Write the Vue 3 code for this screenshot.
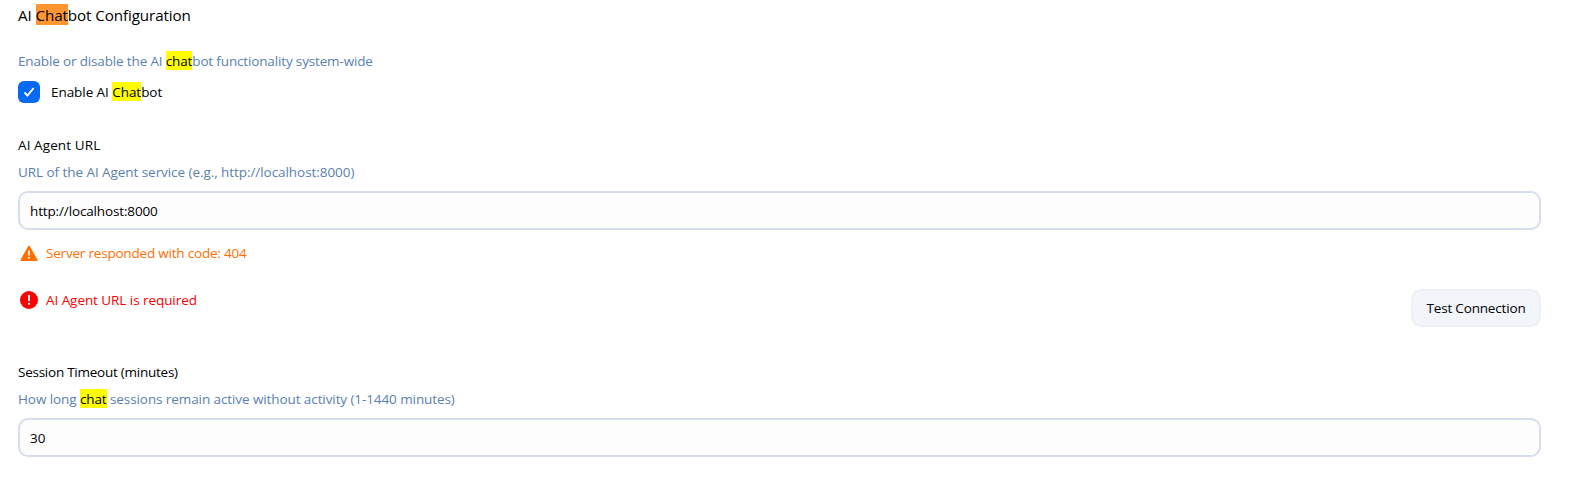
<script setup>
import { ref } from 'vue'

const enabled = ref(true)
const agentUrl = ref('http://localhost:8000')
const timeout = ref('30')
</script>

<template>
  <main class="settings">
    <h2 class="title">AI <mark class="current">Chat</mark>bot Configuration</h2>

    <section class="group toggle">
      <p class="hint hint-enable">Enable or disable the AI <mark>chat</mark>bot functionality system-wide</p>
      <label class="check">
        <input v-model="enabled" class="native" type="checkbox" />
        <span class="box">
          <svg v-if="enabled" viewBox="0 0 22 22" width="22" height="22">
            <path d="M6.5 11.5 L9.4 14.5 L15.6 7.2" fill="none" stroke="#fff" stroke-width="1.9" />
          </svg>
        </span>
        <span class="check-text">Enable AI <mark>Chat</mark>bot</span>
      </label>
    </section>

    <section class="group agent">
      <label class="label label-agent" for="agent-url">AI Agent URL</label>
      <p class="hint hint-agent">URL of the AI Agent service (e.g., http://localhost:8000)</p>
      <input id="agent-url" v-model="agentUrl" class="field field-url" type="text" />
      <div class="message warning">
        <svg viewBox="0 0 18 17" width="18" height="17">
          <path d="M9 1.3 L16.8 15.2 H1.2 Z" fill="#ff7000" stroke="#ff7000" stroke-width="1.6" stroke-linejoin="round" />
          <path d="M9 5.5 V10.5 M9 12 V13.8" stroke="#fff" stroke-width="1.6" />
        </svg>
        <span class="warning-text">Server responded with code: 404</span>
      </div>
      <div class="actions">
        <div class="message error">
          <svg viewBox="0 0 18 18" width="18" height="18">
            <circle cx="9" cy="9" r="9" fill="#fa0000" />
            <path d="M9 4 V10 M9 11.8 V13.8" stroke="#fff" stroke-width="1.8" />
          </svg>
          <span class="error-text">AI Agent URL is required</span>
        </div>
        <button class="test" type="button">Test Connection</button>
      </div>
    </section>

    <section class="group session">
      <label class="label label-session" for="timeout">Session Timeout (minutes)</label>
      <p class="hint hint-session">How long <mark>chat</mark> sessions remain active without activity (1-1440 minutes)</p>
      <input id="timeout" v-model="timeout" class="field" type="text" />
    </section>
  </main>
</template>

<style>
body {
  background: #fff;
}
</style>

<style scoped>
.settings {
  box-sizing: border-box;
  width: 1583px;
  height: 483px;
  padding: 5px 42px 0 18px;
  color: #000;
  font: 13.5px/21px 'Open Sans', 'Noto Sans', sans-serif;
  white-space: nowrap;
}
.title {
  margin: 0;
  font-size: 15.2px;
  font-weight: 400;
  line-height: 21px;
  letter-spacing: -0.1px;
}
mark {
  padding-top: 1px;
  background: #ff0;
  color: #000;
}
mark.current {
  background: #ff9632;
}
.group {
  display: flex;
  flex-direction: column;
}
.toggle {
  margin-top: 25px;
}
.agent {
  margin-top: 32px;
}
.session {
  margin-top: 35px;
}
.label,
.hint {
  height: 19px;
}
.hint {
  margin: 0;
  color: #5b7fb0;
}
.label + .hint {
  margin-top: 8px;
}
.hint-enable {
  letter-spacing: -0.15px;
}
.hint-agent {
  letter-spacing: -0.06px;
}
.hint-session {
  letter-spacing: -0.09px;
}
.label-agent {
  letter-spacing: 0.1px;
}
.label-session {
  letter-spacing: -0.25px;
}
.warning-text {
  letter-spacing: -0.2px;
}
.error-text,
.check-text {
  letter-spacing: -0.06px;
}
.check {
  display: flex;
  align-items: flex-start;
  height: 22px;
  margin-top: 11px;
}
.check-text {
  line-height: 22px;
}
.native {
  position: absolute;
  opacity: 0;
}
.box {
  width: 22px;
  height: 22px;
  margin-right: 11px;
  border-radius: 6px;
  background: #0569f5;
}
.box svg {
  display: block;
}
.field {
  box-sizing: border-box;
  width: 100%;
  height: 39px;
  margin: 10px 0 0;
  padding: 1px 10px 0;
  border: 2px solid #d5deea;
  border-radius: 10px;
  outline: none;
  background: #fdfdfd;
  color: #000;
  font: inherit;
}
.field-url {
  letter-spacing: -0.14px;
}
.message {
  display: flex;
  align-items: flex-start;
  height: 19px;
}
.message svg {
  flex: none;
  margin: 1px 8px 0 2px;
}
.warning {
  margin-top: 13px;
  color: #ff7000;
}
.warning svg {
  margin-top: 2px;
}
.actions {
  display: flex;
  justify-content: space-between;
  align-items: flex-start;
  margin-top: 27px;
}
.error {
  margin-top: 1px;
  color: #fa0000;
}
.test {
  width: 130px;
  height: 38px;
  padding: 1px 0 0;
  border: 2px solid #edf1f5;
  border-radius: 10px;
  background: #f2f5f9;
  color: #000;
  font: inherit;
  letter-spacing: -0.17px;
}
</style>
